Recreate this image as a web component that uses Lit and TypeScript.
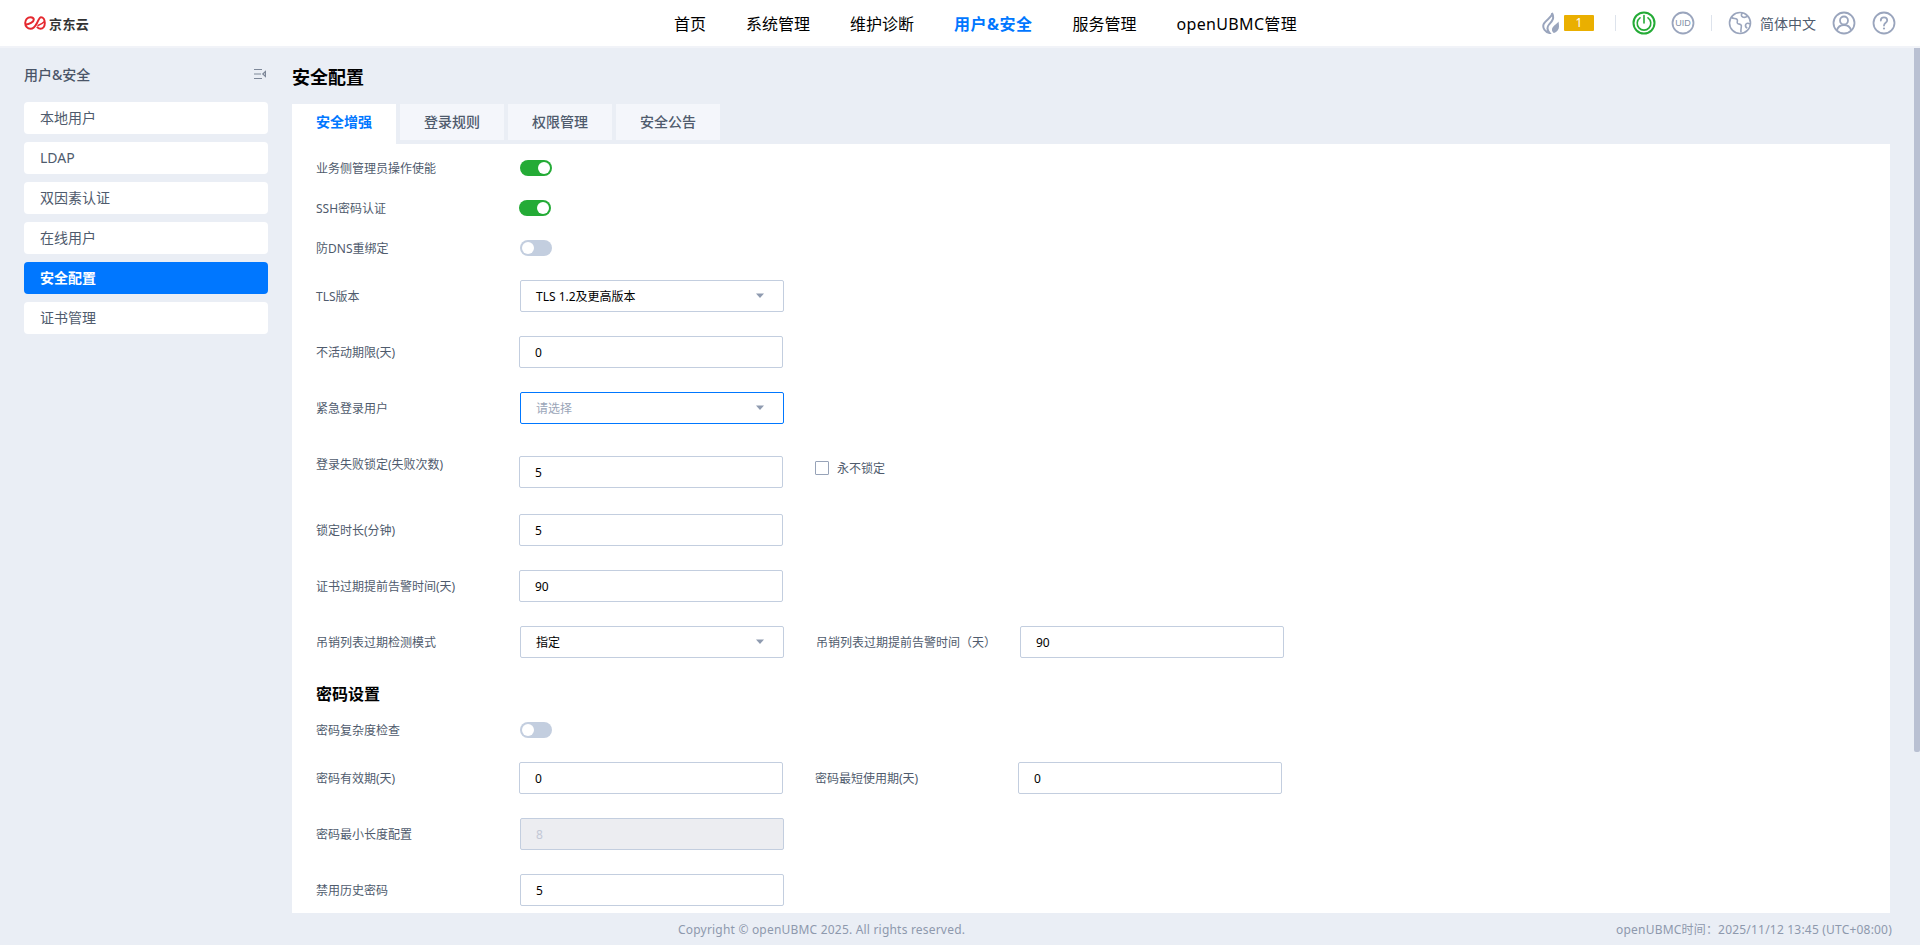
import { LitElement, html, css, svg } from 'lit';
import { customElement } from 'lit/decorators.js';

const navItems = ['首页', '系统管理', '维护诊断', '用户&安全', '服务管理', 'openUBMC管理'];
const sideItems = ['本地用户', 'LDAP', '双因素认证', '在线用户', '安全配置', '证书管理'];
const tabs = ['安全增强', '登录规则', '权限管理', '安全公告'];

const caret = svg`<svg class="caret" width="10" height="6" viewBox="0 0 10 6"><path d="M1 0.5h8L5 5z" fill="#8f9bb0"/></svg>`;

@customElement('app-root')
export class AppRoot extends LitElement {
  static styles = css`
    :host {
      display: block;
      height: 945px;
      overflow: hidden;
      position: relative;
      background: #eaeef5;
      font-family: 'Noto Sans', 'Noto Sans CJK SC', sans-serif;
      font-size: 12px;
      color: #4f5b6d;
    }
    .header {
      display: flex;
      align-items: center;
      height: 46px;
      padding-left: 24px;
      background: #fff;
      border-bottom: 2px solid #f1f3f8;
    }
    .logo {
      display: flex;
      align-items: center;
      gap: 3px;
      width: 66px;
      color: #333;
      font-size: 13px;
      font-weight: 700;
      letter-spacing: 0.4px;
      white-space: nowrap;
    }
    .nav {
      display: flex;
      gap: 40px;
      margin-left: 584px;
      font-size: 16px;
      color: #000;
    }
    .nav .on {
      color: #0077ff;
      font-weight: 700;
      letter-spacing: 0.5px;
    }
    .nav .latin {
      letter-spacing: 0.33px;
    }
    .tools {
      position: absolute;
      top: 0;
      left: 1542px;
      height: 46px;
      display: flex;
      align-items: center;
    }
    .badge {
      width: 30px;
      height: 16px;
      margin: 0 21px 0 4px;
      border-radius: 1px;
      background: #eaaf00;
      color: #fff;
      font-size: 12px;
      line-height: 16px;
      text-align: center;
    }
    .sep {
      width: 1px;
      height: 16px;
      margin-right: 16px;
      background: #dde3ec;
    }
    .gap {
      margin-left: 16px;
    }
    .gap-uid {
      margin: 0 16px 0 15px;
    }
    .lang {
      margin: 0 16px 0 8px;
      font-size: 14px;
      color: #4f5b6d;
      white-space: nowrap;
    }
    .body {
      display: flex;
      height: 897px;
    }
    .side {
      width: 244px;
      padding: 0 24px;
      flex: none;
    }
    .side-title {
      display: flex;
      align-items: center;
      justify-content: space-between;
      height: 22px;
      margin: 15px 2px 17px 0;
      font-size: 14px;
      font-weight: 500;
      color: #4a5568;
    }
    .side-item {
      height: 32px;
      margin-bottom: 8px;
      padding-left: 16px;
      border-radius: 4px;
      background: #fff;
      font-size: 14px;
      line-height: 32px;
      color: #4f5b6d;
    }
    .side-item.on {
      background: #0077ff;
      color: #fff;
      font-weight: 700;
    }
    .main {
      flex: 1;
      min-width: 0;
      display: flex;
      flex-direction: column;
      padding-right: 30px;
    }
    h1 {
      margin: 16px 0 14px;
      font-size: 18px;
      line-height: 26px;
      font-weight: 700;
      color: #000;
    }
    .tabs {
      display: flex;
      align-items: flex-start;
      gap: 4px;
      height: 40px;
      flex: none;
    }
    .tab {
      width: 104px;
      height: 36px;
      background: #f4f6fb;
      font-size: 14px;
      font-weight: 500;
      line-height: 36px;
      text-align: center;
      color: #4f5b6d;
    }
    .tab.on {
      height: 40px;
      background: #fff;
      color: #0077ff;
      font-weight: 700;
    }
    .panel {
      flex: 1;
      min-height: 0;
      overflow: hidden;
      padding: 16px 24px 0;
      background: #fff;
    }
    .row {
      display: flex;
      align-items: center;
      margin-top: 24px;
    }
    .row:first-child {
      margin-top: 0;
    }
    .row.wide {
      margin-top: 32px;
    }
    .row.mid {
      margin-top: 26px;
    }
    .row.tight {
      margin-top: 16px;
    }
    .label {
      width: 204px;
      height: 16px;
      flex: none;
      color: #4f5b6d;
      line-height: 18px;
      white-space: nowrap;
    }
    .label.up {
      align-self: flex-start;
    }
    .after {
      margin-left: 32px;
    }
    .after.short {
      width: 203px;
    }
    .toggle {
      position: relative;
      width: 32px;
      height: 16px;
      border-radius: 8px;
      background: #c3cedf;
    }
    .toggle.on {
      background: #24ab36;
    }
    .toggle::after {
      content: '';
      position: absolute;
      top: 2px;
      left: 2px;
      width: 12px;
      height: 12px;
      border-radius: 50%;
      background: #fff;
    }
    .toggle.on::after {
      left: 18px;
    }
    .nudge {
      margin-left: -1px;
    }
    .field {
      display: flex;
      align-items: center;
      justify-content: space-between;
      box-sizing: border-box;
      width: 264px;
      height: 32px;
      padding: 0 15px;
      border: 1px solid #c3cedf;
      border-radius: 2px;
      background: #fff;
      color: #000;
      line-height: 30px;
      font-family: inherit;
      font-size: 12px;
      outline: none;
    }
    .field span {
      padding-top: 2px;
    }
    .field.focus {
      border-color: #0077ff;
      color: #9aa5b8;
    }
    .field.off {
      background: #ecedf1;
      color: #c3c8d6;
    }
    .caret {
      margin-right: 3px;
    }
    .never {
      display: flex;
      align-items: center;
      gap: 8px;
      margin: -8px 0 0 32px;
    }
    .box {
      box-sizing: border-box;
      width: 14px;
      height: 14px;
      border: 1px solid #97a3b8;
      border-radius: 1px;
    }
    h2 {
      margin: 24px 0 0;
      font-size: 16px;
      line-height: 24px;
      font-weight: 700;
      color: #000;
    }
    .footer {
      position: relative;
      flex: none;
      height: 32px;
      padding-left: 386px;
      line-height: 34px;
      letter-spacing: 0.2px;
      color: #8e99ad;
    }
    .footer .time {
      position: absolute;
      right: -2px;
      top: 0;
    }
    .scroll {
      position: absolute;
      top: 48px;
      right: 0;
      width: 6px;
      height: 704px;
      border-radius: 0 0 2px 2px;
      background: #b9c0d2;
    }
  `;

  private input(value: string, cls = '') {
    return html`<input class="field ${cls}" .value=${value} readonly />`;
  }

  private select(value: string, cls = '') {
    return html`<div class="field ${cls}"><span>${value}</span>${caret}</div>`;
  }

  private navClass(n: string) {
    if (n === '用户&安全') return 'on';
    return n.startsWith('open') ? 'latin' : '';
  }

  render() {
    return html`
      <div class="header">
        <div class="logo">
          <svg width="22" height="14" viewBox="0 0 22 14" fill="none" stroke="#e5292f" stroke-width="2">
            <path d="M2 8.500C5 8.500 9.800 6 9.800 3.800 9.800 2.200 8.200 1.200 6.500 1.200 3.500 1.200 1.200 3.800 1.200 7c0 3.200 2.300 5.800 5.300 5.800 3.500 0 5.500-3.800 6.500-5.800 1-2 2.500-5.800 4-5.800 2.200 0 3.800 2.600 3.800 5.800s-1.800 5.800-4.300 5.800c-1.500 0-2.800-.8-3.500-2" />
            <path d="M13.500 9.800C15.500 9 18.500 7.500 20.500 5.500" stroke-width="1.500" />
          </svg>
          京东云
        </div>
        <div class="nav">
          ${navItems.map((n) => html`<span class=${this.navClass(n)}>${n}</span>`)}
        </div>
        <div class="tools">
          <svg width="18" height="22" viewBox="0 0 18 22" fill="none" stroke="#9aa5bd" stroke-width="2">
            <path d="M10 1C11 5 3 8 1.500 12.500 0.500 16 3 20 7.500 21 4.500 17.500 5 15 7 12.500 9.500 9.500 13 7 10 1z" />
            <path d="M16.500 9.500C15 12 10.500 14 10 17c-.3 2 .8 3.500 2 4 3-.8 5-3.500 5-6.500 0-1.800-.2-3.500-.5-5z" fill="#9aa5bd" stroke="none" />
          </svg>
          <div class="badge">1</div>
          <div class="sep"></div>
          <svg width="24" height="24" viewBox="0 0 24 24" fill="none" stroke="#24ab36" stroke-width="2">
            <circle cx="12" cy="12" r="10.500" />
            <path d="M8 6.800a6.800 6.800 0 1 0 8 0M12 4.500V12" stroke-width="1.600" stroke-linecap="round" />
          </svg>
          <svg class="gap-uid" width="24" height="24" viewBox="0 0 24 24" fill="none">
            <circle cx="12" cy="12" r="10.500" stroke="#9aa5bd" stroke-width="1.800" />
            <text x="12" y="15.300" text-anchor="middle" font-size="9" font-family="Liberation Sans" fill="#8390a8">UID</text>
          </svg>
          <div class="sep"></div>
          <svg width="24" height="24" viewBox="0 0 24 24" fill="none" stroke="#9aa5bd" stroke-width="1.600">
            <circle cx="12" cy="12" r="10.500" />
            <path d="M3.500 6.500c2 1.500 4 .5 5.500 1.800 1.300 1.200-.5 2.700.5 3.900 1.200 1.300 3.300.6 3.800 2.300.4 1.500-.8 3-.3 6.800M14.500 1.800c-1.300 1.700-1.800 3 .2 4.200 2 1.100 3.300-.2 4.800-.7M22 13c-1.500-1-3.500-1.200-4.300.5-.6 1.400.4 3 1.500 3.700" />
          </svg>
          <span class="lang">简体中文</span>
          <svg width="24" height="24" viewBox="0 0 24 24" fill="none" stroke="#9aa5bd" stroke-width="1.800">
            <circle cx="12" cy="12" r="10.500" />
            <circle cx="12" cy="9.500" r="4" />
            <path d="M4.800 19.500c1-3.500 3.800-5.500 7.200-5.500s6.200 2 7.200 5.500" />
          </svg>
          <svg class="gap" width="24" height="24" viewBox="0 0 24 24" fill="none" stroke="#9aa5bd" stroke-width="1.800">
            <circle cx="12" cy="12" r="10.500" />
            <path d="M8.800 9.500c0-1.900 1.400-3.200 3.200-3.200s3.200 1.200 3.200 2.900c0 2.600-3.200 2.600-3.200 5.300" stroke-linecap="round" />
            <circle cx="12" cy="17.500" r="1.100" fill="#9aa5bd" stroke="none" />
          </svg>
        </div>
      </div>

      <div class="body">
        <div class="side">
          <div class="side-title">
            <span>用户&安全</span>
            <svg width="12" height="12" viewBox="0 0 12 12" fill="none" stroke="#7d8798" stroke-width="1.200">
              <path d="M0 1.500h8M0 6h7M0 10.500h8M11.500 3.500L8.800 6l2.700 2.500z" />
            </svg>
          </div>
          ${sideItems.map((s) => html`<div class="side-item ${s === '安全配置' ? 'on' : ''}">${s}</div>`)}
        </div>

        <div class="main">
          <h1>安全配置</h1>
          <div class="tabs">
            ${tabs.map((t, i) => html`<div class="tab ${i === 0 ? 'on' : ''}">${t}</div>`)}
          </div>
          <div class="panel">
            <div class="row"><div class="label">业务侧管理员操作使能</div><div class="toggle on"></div></div>
            <div class="row"><div class="label">SSH密码认证</div><div class="toggle on nudge"></div></div>
            <div class="row"><div class="label">防DNS重绑定</div><div class="toggle"></div></div>
            <div class="row"><div class="label">TLS版本</div>${this.select('TLS 1.2及更高版本')}</div>
            <div class="row"><div class="label">不活动期限(天)</div>${this.input('0', 'nudge')}</div>
            <div class="row"><div class="label">紧急登录用户</div>${this.select('请选择', 'focus')}</div>
            <div class="row wide">
              <div class="label up">登录失败锁定(失败次数)</div>
              ${this.input('5', 'nudge')}
              <div class="never"><div class="box"></div><span>永不锁定</span></div>
            </div>
            <div class="row mid"><div class="label">锁定时长(分钟)</div>${this.input('5', 'nudge')}</div>
            <div class="row"><div class="label">证书过期提前告警时间(天)</div>${this.input('90', 'nudge')}</div>
            <div class="row">
              <div class="label">吊销列表过期检测模式</div>
              ${this.select('指定')}
              <div class="label after">吊销列表过期提前告警时间（天）</div>
              ${this.input('90')}
            </div>
            <h2>密码设置</h2>
            <div class="row tight"><div class="label">密码复杂度检查</div><div class="toggle"></div></div>
            <div class="row">
              <div class="label">密码有效期(天)</div>
              ${this.input('0', 'nudge')}
              <div class="label after short">密码最短使用期(天)</div>
              ${this.input('0')}
            </div>
            <div class="row"><div class="label">密码最小长度配置</div>${this.input('8', 'off')}</div>
            <div class="row"><div class="label">禁用历史密码</div>${this.input('5')}</div>
          </div>
          <div class="footer">
            <span>Copyright © openUBMC 2025. All rights reserved.</span>
            <span class="time">openUBMC时间：2025/11/12 13:45 (UTC+08:00)</span>
          </div>
        </div>
      </div>
      <div class="scroll"></div>
    `;
  }
}
